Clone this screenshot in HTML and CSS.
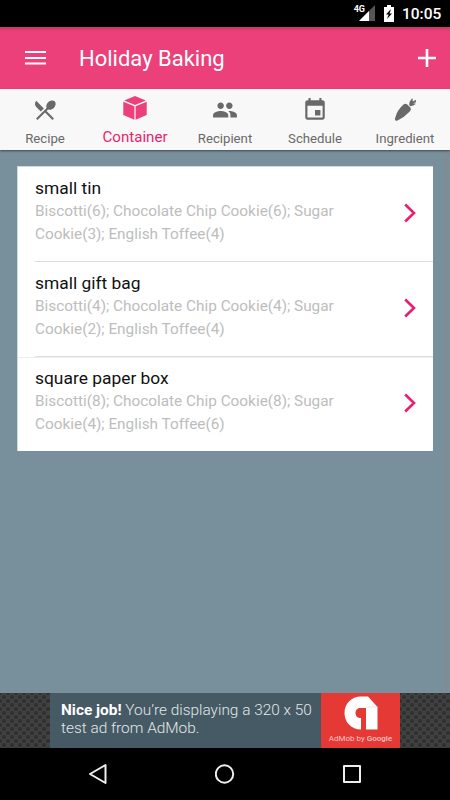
FILE: index.html
```html
<!DOCTYPE html>
<html lang="en">
<head>
  <meta charset="UTF-8">
  <meta name="viewport" content="width=device-width, initial-scale=1.0">
  <title>Holiday Baking</title>
  <link rel="stylesheet" href="styles.css">
</head>
<body>
  <!-- Status Bar -->
  <div class="status-bar">
    <span class="network">4G</span>
    <svg class="signal" width="16" height="16" viewBox="0 0 16 16">
      <path d="M16 0v16H0z" fill="#555"/>
      <path d="M10 6v10H0z" fill="#fff"/>
    </svg>
    <svg class="battery" width="10" height="17" viewBox="0 0 10 17">
      <path d="M3 0h4v2h3v15H0V2h3z" fill="#fff"/>
      <path d="M7 4L2 9.500h2.600L3 14 8 8.500H5.500z" fill="#000"/>
    </svg>
    <span class="clock">10:05</span>
  </div>

  <!-- Header -->
  <header class="app-bar">
    <svg class="menu-icon" width="22" height="16" viewBox="0 0 22 16">
      <path d="M0 2h21M0 8h21M0 13.500h21" stroke="#fff" stroke-width="2.200"/>
    </svg>
    <h1 class="app-title">Holiday Baking</h1>
    <svg class="add-icon" width="18" height="18" viewBox="0 0 18 18">
      <path d="M0 9h18M9 0v18" stroke="#fff" stroke-width="2.600"/>
    </svg>
  </header>

  <!-- Tabs -->
  <nav class="tabs">
    <div class="tab">
      <svg class="tab-icon" viewBox="0 0 24 24"><path d="M8.1 13.34l2.83-2.83L3.91 3.5c-1.56 1.56-1.56 4.09 0 5.66l4.19 4.18zm6.78-1.81c1.53.71 3.68.21 5.27-1.38 1.91-1.91 2.28-4.65.81-6.12-1.46-1.46-4.2-1.1-6.12.81-1.59 1.59-2.09 3.74-1.38 5.27L3.7 19.87l1.41 1.41L12 14.41l6.88 6.88 1.41-1.41L13.41 13l1.47-1.47z"/></svg>
      <span class="tab-label">Recipe</span>
    </div>
    <div class="tab active">
      <svg class="tab-icon" viewBox="0 0 26 26"><path d="M13 1l10.800 4.500L13 10 2.200 5.500zM1.300 6.800l11.100 4.500v13.500L1.300 20zM24.700 6.800l-11.100 4.500v13.500L24.700 20z"/></svg>
      <span class="tab-label">Container</span>
    </div>
    <div class="tab">
      <svg class="tab-icon" viewBox="0 0 24 24"><path d="M16 11c1.66 0 2.99-1.34 2.99-3S17.66 5 16 5s-3 1.34-3 3 1.34 3 3 3zm-8 0c1.66 0 2.99-1.34 2.99-3S9.66 5 8 5 5 6.34 5 8s1.34 3 3 3zm0 2c-2.33 0-7 1.17-7 3.5V19h14v-2.5c0-2.33-4.67-3.5-7-3.5zm8 0c-.29 0-.62.02-.97.05 1.16.84 1.97 1.97 1.97 3.45V19h6v-2.5c0-2.33-4.67-3.5-7-3.5z"/></svg>
      <span class="tab-label">Recipient</span>
    </div>
    <div class="tab">
      <svg class="tab-icon" viewBox="0 0 24 24"><path d="M17 12h-5v5h5v-5zM16 1v2H8V1H6v2H5c-1.11 0-1.99.9-1.99 2L3 19c0 1.1.89 2 2 2h14c1.1 0 2-.9 2-2V5c0-1.1-.9-2-2-2h-1V1h-2zm3 18H5V8h14v11z"/></svg>
      <span class="tab-label">Schedule</span>
    </div>
    <div class="tab">
      <svg class="tab-icon" viewBox="0 0 26 26"><path d="M11.500 7.500Q13.500 5.800 15.300 7.500L18.300 10.500Q19.800 12.200 18 14.200 12 20.500 5.500 23.600 2.600 24.600 3 21.500 5 13 11.500 7.500zM17.200 8.200Q16.800 4.800 19.500 2L20.500 1.200 20.800 4.600 23.800 2.800 24 5.200 21.200 6.200 24 6.800Q22 8.800 18.800 9.200z"/></svg>
      <span class="tab-label">Ingredient</span>
    </div>
  </nav>

  <!-- Container List -->
  <main class="content">
    <div class="list">
      <div class="item">
        <div class="item-text">
          <h2 class="item-title">small tin</h2>
          <p class="item-detail">Biscotti(6); Chocolate Chip Cookie(6); Sugar Cookie(3); English Toffee(4)</p>
        </div>
        <svg class="arrow" width="12" height="20" viewBox="0 0 12 20"><path d="M1.200 1.500L10 10l-8.800 8.500"/></svg>
      </div>
      <div class="item">
        <div class="item-text">
          <h2 class="item-title">small gift bag</h2>
          <p class="item-detail">Biscotti(4); Chocolate Chip Cookie(4); Sugar Cookie(2); English Toffee(4)</p>
        </div>
        <svg class="arrow" width="12" height="20" viewBox="0 0 12 20"><path d="M1.200 1.500L10 10l-8.800 8.500"/></svg>
      </div>
      <div class="item last">
        <div class="item-text">
          <h2 class="item-title">square paper box</h2>
          <p class="item-detail">Biscotti(8); Chocolate Chip Cookie(8); Sugar Cookie(4); English Toffee(6)</p>
        </div>
        <svg class="arrow" width="12" height="20" viewBox="0 0 12 20"><path d="M1.200 1.500L10 10l-8.800 8.500"/></svg>
      </div>
    </div>
    <div class="scroll-track"></div>
  </main>

  <!-- Ad Banner -->
  <div class="ad">
    <div class="ad-banner">
      <p class="ad-text"><span class="ad-line"><b>Nice job!</b> You’re displaying a 320 x 50</span><span class="ad-line">test ad from AdMob.</span></p>
      <div class="ad-logo">
        <svg width="34" height="34" viewBox="0 0 34 34">
          <path d="M17 .5h7L33.500 11v22.500H22V12h-5.500c-3 0-5 2-5 5s2 5 5.500 5v11.500C7.500 33.500.5 26.500.5 17S7.500.5 17 .5z" fill="#fff"/>
          <path d="M22 11h11.500" stroke="#ddd" stroke-width=".7"/>
        </svg>
        <span class="ad-brand">AdMob by <b>Google</b></span>
      </div>
    </div>
  </div>

  <!-- Navigation Bar -->
  <div class="nav-bar">
    <svg width="20" height="22" viewBox="0 0 20 22"><path d="M17.500 2v18L2 11z"/></svg>
    <svg width="20" height="22" viewBox="0 0 20 22"><circle cx="9.500" cy="11" r="8.700"/></svg>
    <svg width="20" height="22" viewBox="0 0 20 22"><rect x="2" y="3" width="16" height="16"/></svg>
  </div>
</body>
</html>
```

FILE: styles.css
```css
* {
  box-sizing: border-box;
}

body {
  margin: 0;
  width: 450px;
  height: 800px;
  display: flex;
  flex-direction: column;
  overflow: hidden;
  font-family: Roboto, "Noto Sans", sans-serif;
  background: #78909c;
}

h1, h2, p {
  margin: 0;
  font-weight: normal;
}

svg {
  display: block;
  flex-shrink: 0;
}

/* Status Bar */
.status-bar {
  height: 27px;
  flex-shrink: 0;
  background: #000;
  color: #fff;
  display: flex;
  justify-content: flex-end;
  align-items: flex-start;
  padding: 5px 8px 0 0;
}

.network {
  font-size: 9px;
  font-weight: bold;
  line-height: 9px;
  margin-right: -6px;
}

.signal {
  margin-right: 9px;
}

.battery {
  margin-right: 8px;
}

.clock {
  width: 40px;
  font-size: 15.5px;
  font-weight: 500;
  line-height: 19px;
  white-space: nowrap;
}

/* Header */
.app-bar {
  height: 62px;
  flex-shrink: 0;
  background: linear-gradient(#c4366a, #ec407a 4px);
  color: #fff;
  display: flex;
  align-items: center;
  padding: 0 14px 0 25px;
}

.app-title {
  flex: 1;
  margin-left: 32px;
  font-size: 22px;
}

/* Tabs */
.tabs {
  height: 61px;
  flex-shrink: 0;
  background: #f8f8f8;
  display: flex;
  position: relative;
  box-shadow: 0 1px 2px rgba(0, 0, 0, 0.5);
}

.tab {
  width: 90px;
  display: flex;
  flex-direction: column;
  align-items: center;
  padding-top: 8px;
  color: #696969;
}

.tab-icon {
  width: 26px;
  height: 26px;
  fill: #696969;
}

.tab-label {
  margin-top: 7px;
  font-size: 13.2px;
  line-height: 17px;
}

.tab.active {
  padding-top: 6px;
  color: #e91e70;
}

.active .tab-icon {
  fill: #ec407a;
}

.active .tab-label {
  margin-top: 8px;
  font-size: 15.1px;
}

/* Container List */
.content {
  flex: 1;
  display: flex;
  justify-content: space-between;
  align-items: flex-start;
  padding-left: 17px;
}

.list {
  width: 416px;
  margin-top: 16px;
  background: #fff;
  border: 1px solid #cfd8dc;
  border-width: 1px 0 0 1px;
}

.item {
  margin-left: 17px;
  height: 95px;
  display: flex;
  justify-content: space-between;
  padding: 11px 17px 0 0;
  border-bottom: 1px solid #ddd;
}

.item.last {
  height: 94px;
  margin-left: 0;
  padding-left: 17px;
  border-top: 1px solid #eceff1;
  border-bottom: none;
  padding-top: 10px;
}

.item-text {
  width: 320px;
}

.item-title {
  font-size: 17.4px;
  line-height: 20px;
  color: #111;
}

.item-detail {
  margin-top: 2px;
  font-size: 15.35px;
  line-height: 23px;
  color: #bdbdbd;
}

.arrow {
  margin-top: 25px;
  fill: none;
  stroke: #e91e70;
  stroke-width: 2.6;
}

.scroll-track {
  width: 6px;
  align-self: stretch;
  background: linear-gradient(90deg, #808b92 3px, #78909c 3px);
}

/* Ad Banner */
.ad {
  height: 55px;
  flex-shrink: 0;
  display: flex;
  justify-content: center;
  background-color: #414141;
  background-image: radial-gradient(circle, #303030 1.5px, transparent 2.5px), radial-gradient(circle, #303030 1.5px, transparent 2.5px);
  background-size: 8px 8px;
  background-position: 0 0, 4px 4px;
}

.ad-banner {
  width: 350px;
  display: flex;
  background: #455a64;
}

.ad-text {
  width: 271px;
  padding: 8px 0 0 11px;
  color: #e3e8ea;
  font-size: 15.4px;
  font-weight: 300;
  line-height: 18px;
  white-space: nowrap;
}

.ad-text b {
  color: #fff;
  font-weight: 700;
}

.ad-line {
  display: block;
}

.ad-logo {
  width: 79px;
  background: #e53935;
  display: flex;
  flex-direction: column;
  align-items: center;
  padding-top: 3px;
}

.ad-brand {
  margin-top: 4px;
  font-size: 8px;
  line-height: 10px;
  color: #f8c5c3;
  white-space: nowrap;
}

.ad-brand b {
  font-weight: 500;
}

/* Navigation Bar */
.nav-bar {
  height: 52px;
  flex-shrink: 0;
  background: #000;
  display: flex;
  justify-content: space-between;
  padding: 15px 88px 0 88px;
  fill: none;
  stroke: #eee;
  stroke-width: 2;
  stroke-linejoin: round;
}
```
